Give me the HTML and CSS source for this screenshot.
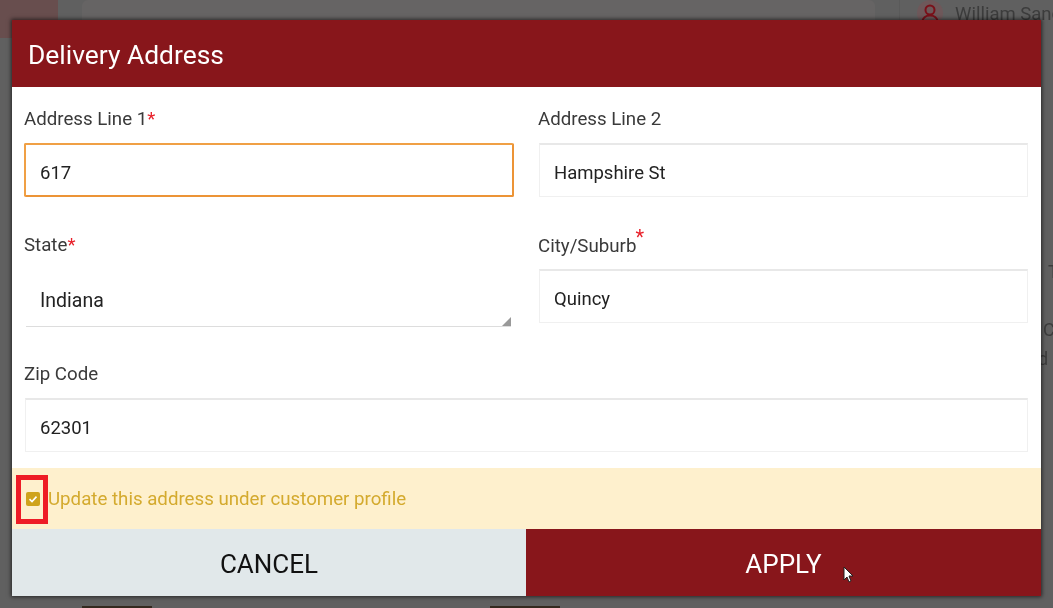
FILE: index.html
```html
<!DOCTYPE html>
<html lang="en">
<head>
  <meta charset="UTF-8" />
  <meta name="viewport" content="width=device-width, initial-scale=1.0"/>
  <title>Delivery Address</title>
  <link rel="stylesheet" href="styles.css">
</head>
<body>

  <!-- Page behind the dialog -->
  <div class="backdrop">
    <div class="topbar">
      <div class="logo-box"></div>
      <div class="search-bar"></div>
      <div class="user">
        <span class="user-icon">
          <svg width="20" height="20" viewBox="0 0 20 20" fill="none" stroke="#7a1019" stroke-width="2">
            <circle cx="10" cy="7" r="4.500"/>
            <path d="M2.500 19c0-4 3-6.500 7.500-6.500s7.500 2.500 7.500 6.500"/>
          </svg>
        </span>
        <span class="user-name">William Sanders</span>
      </div>
    </div>
    <div class="side-text">
      <span class="side-t">T</span>
      <span class="side-c">C</span>
      <span class="side-d">d</span>
    </div>
    <div class="bottom-tabs">
      <span class="bottom-tab"></span>
      <span class="bottom-tab"></span>
    </div>
  </div>

  <!-- Dialog -->
  <div class="modal">
    <div class="modal-header">Delivery Address</div>

    <div class="modal-body">
      <div class="field">
        <div class="field-label">Address Line 1<span class="req">*</span></div>
        <div class="text-input focused">617</div>
      </div>
      <div class="field field-right">
        <div class="field-label">Address Line 2</div>
        <div class="text-input">Hampshire St</div>
      </div>
      <div class="field">
        <div class="field-label">State<span class="req">*</span></div>
        <div class="select-input">Indiana<span class="select-arrow"></span></div>
      </div>
      <div class="field field-right">
        <div class="field-label">City/Suburb<span class="req req-raised">*</span></div>
        <div class="text-input">Quincy</div>
      </div>
      <div class="field field-wide">
        <div class="field-label">Zip Code</div>
        <div class="text-input">62301</div>
      </div>
    </div>

    <div class="notice">
      <span class="check">
        <svg width="14" height="14" viewBox="0 0 14 14" fill="none" stroke="#fff" stroke-width="1.600">
          <path d="M3.500 7.200l2.500 2.400 4.500-5"/>
        </svg>
      </span>
      <span>Update this address under customer profile</span>
    </div>

    <div class="modal-footer">
      <button class="btn btn-cancel">CANCEL</button>
      <button class="btn btn-apply">APPLY</button>
    </div>
  </div>

  <!-- Annotation and mouse pointer on top of the screenshot -->
  <div class="highlight"></div>
  <svg class="cursor" width="12" height="18" viewBox="0 0 12 18">
    <path d="M1 1v13l3-3 2 5 2-1-2-5h4z" fill="#fff" stroke="#222" stroke-width="1"/>
  </svg>

</body>
</html>
```

FILE: styles.css
```css
html, body {
  margin: 0;
  height: 100%;
  overflow: hidden;
}

body {
  font-family: Roboto, Arial, sans-serif;
  background-color: #606060;
  color: #333;
}

/* background page */
.backdrop {
  height: 608px;
  display: flex;
  flex-direction: column;
  justify-content: space-between;
  position: relative;
  overflow: hidden;
  filter: blur(0.5px);
}

.topbar {
  display: flex;
  height: 38px;
}

.logo-box {
  width: 58px;
  height: 38px;
  flex-shrink: 0;
  background-color: #684e4e;
}

.search-bar {
  width: 793px;
  height: 30px;
  flex-shrink: 0;
  margin-left: 24px;
  background-color: #666464;
  border-radius: 6px;
}

.user {
  display: flex;
  align-items: flex-start;
  flex-shrink: 0;
  margin-left: 24px;
  padding-left: 17px;
  border-left: 1px solid #5a5a5a;
  gap: 12px;
  white-space: nowrap;
}

.user-icon {
  width: 26px;
  height: 26px;
  border-radius: 50%;
  background-color: #6e585a;
  display: flex;
  align-items: center;
  justify-content: center;
}

.user-name {
  font-size: 18.500px;
  line-height: 29px;
  color: #3c3c3c;
}

.side-text {
  font-size: 18px;
  color: #3c3c3c;
}

.side-text span {
  position: absolute;
}

.side-t { left: 1048px; top: 261px; }
.side-c { left: 1043px; top: 319px; }
.side-d { left: 1038px; top: 348px; }

.bottom-tabs {
  display: flex;
  gap: 338px;
  padding-left: 82px;
}

.bottom-tab {
  width: 70px;
  height: 2px;
  background-color: #33291f;
}

/* dialog */
.modal {
  position: absolute;
  left: 12px;
  top: 20px;
  width: 1029px;
  height: 576px;
  display: flex;
  flex-direction: column;
  background-color: #fff;
  box-shadow: 0 0 4px 1px rgba(0,0,0,0.6);
  filter: blur(0.4px);
}

.modal-header {
  height: 67px;
  flex-shrink: 0;
  padding-left: 16px;
  background-color: #88161b;
  color: #fff;
  font-size: 26.400px;
  line-height: 70px;
}

.modal-body {
  flex: 1;
  display: grid;
  grid-template-columns: 490px 490px;
  column-gap: 24px;
  row-gap: 36px;
  align-content: start;
  padding: 20px 12px 0;
}

.field-wide {
  grid-column: 1 / 3;
}

.field-label {
  height: 24px;
  line-height: 24px;
  font-size: 18.700px;
  color: #3a3a3a;
  margin-bottom: 12px;
  white-space: nowrap;
}

.req {
  color: #e8202a;
}

.req-raised {
  font-size: 20px;
  position: relative;
  top: -8px;
  left: -1px;
}

.text-input {
  box-sizing: border-box;
  height: 54px;
  margin-left: 1px;
  padding-left: 14px;
  font-size: 18.500px;
  line-height: 57px;
  color: #222;
  border: 1px solid #f0f0f0;
  border-top: 2px solid #e8e8e8;
}

.text-input.focused {
  padding-left: 14px;
  margin-left: 0;
  border: 2px solid #f0a045;
  border-right-color: #ec9436;
  border-bottom-color: #ec9436;
  border-radius: 2px;
  line-height: 56px;
}

.field-right .text-input {
  width: 489px;
}

.field-wide .text-input {
  width: 1003px;
}

.select-input {
  position: relative;
  box-sizing: border-box;
  height: 58px;
  margin: 0 3px -1px 2px;
  padding-left: 14px;
  font-size: 19.500px;
  line-height: 63px;
  color: #222;
  border-bottom: 1px solid #ddd;
}

.select-arrow {
  position: absolute;
  right: 0;
  bottom: 0;
  width: 0;
  height: 0;
  border-left: 9px solid transparent;
  border-bottom: 9px solid #999;
}

.notice {
  height: 61px;
  flex-shrink: 0;
  display: flex;
  align-items: center;
  gap: 8px;
  padding-left: 14px;
  background-color: #fef0cd;
  color: #d4aa2e;
  font-size: 18.700px;
}

.check {
  width: 14px;
  height: 14px;
  border-radius: 2px;
  background-color: #cfa31c;
  display: flex;
}

.modal-footer {
  height: 67px;
  flex-shrink: 0;
  display: flex;
}

.btn {
  border: none;
  padding: 2px 0 0;
  font-family: inherit;
  font-size: 26px;
}

.btn-cancel {
  width: 514px;
  background-color: #e1e8ea;
  color: #111;
}

.btn-apply {
  flex: 1;
  background-color: #88161b;
  color: #fff;
}

/* annotation */
.highlight {
  position: absolute;
  left: 16px;
  top: 475px;
  width: 22px;
  height: 39px;
  border: 5px solid #ee1c25;
}

.cursor {
  position: absolute;
  left: 843px;
  top: 566px;
}
```
